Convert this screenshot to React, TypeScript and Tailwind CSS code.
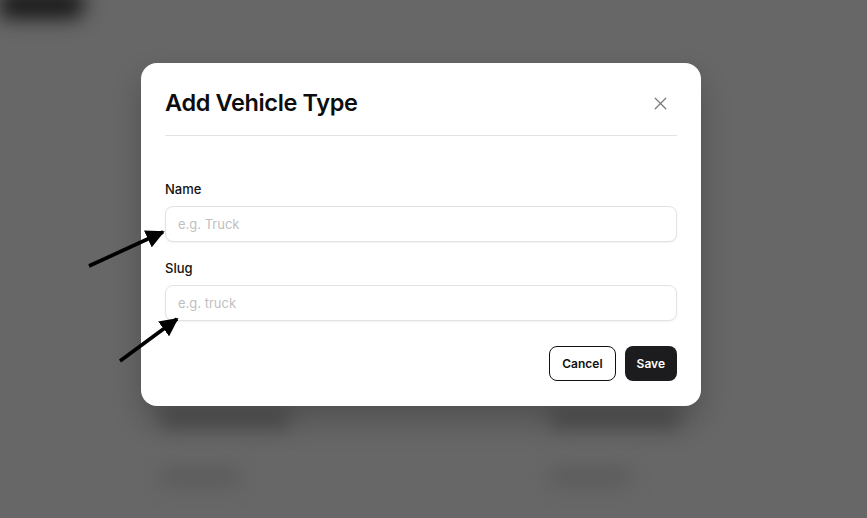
import { X } from 'lucide-react'

// Blurred page behind the dialog
const BackdropPage = () => {
  return (
    <div className="flex h-full flex-col">
      <div className="flex blur-[10px]">
        <div className="h-[26px] w-[84px] -translate-y-[8px] rounded-br-xl bg-[#151515]" />
      </div>
      <div className="mt-[384px] grid grid-cols-2 gap-x-[232px] px-[160px] blur-[10px]">
        <div className="flex flex-col gap-[42px]">
          <div className="h-[18px] w-[130px] rounded bg-[#4c4c4c]" />
          <div className="h-[14px] w-[80px] rounded bg-[#575757]" />
        </div>
        <div className="flex flex-col gap-[42px]">
          <div className="h-[18px] w-[130px] rounded bg-[#4c4c4c]" />
          <div className="h-[14px] w-[80px] rounded bg-[#575757]" />
        </div>
      </div>
    </div>
  )
}

const Field = ({ label, placeholder, id }: { label: string; placeholder: string; id: string }) => (
  <div className="flex flex-col">
    <label htmlFor={id} className="mb-[7px] text-[13px] font-medium leading-5 text-[#111]">
      {label}
    </label>
    <input
      id={id}
      type="text"
      placeholder={placeholder}
      className="h-9 w-full rounded-lg border border-[#e3e3e3] bg-white px-3 text-[13px] text-[#111] shadow-[0_1px_2px_rgba(0,0,0,0.06)] outline-none placeholder:text-[#bfbfbf]"
    />
  </div>
)

const Arrows = () => (
  <svg className="pointer-events-none absolute inset-0" width="867" height="518" viewBox="0 0 867 518">
    <defs>
      <marker id="head" viewBox="0 0 10 10" refX="9" refY="5" markerWidth="5" markerHeight="5" orient="auto">
        <path d="M0 0 L10 5 L0 10 Z" fill="#000" />
      </marker>
    </defs>
    <line x1="89" y1="266" x2="163" y2="232" stroke="#000" strokeWidth="3.7" markerEnd="url(#head)" />
    <line x1="120" y1="361" x2="177" y2="319" stroke="#000" strokeWidth="3.7" markerEnd="url(#head)" />
  </svg>
)

const App = () => {
  return (
    <div className="relative h-[518px] w-full overflow-hidden bg-[#676767] font-['Inter','Liberation_Sans',sans-serif]">
      <BackdropPage />

      <div className="absolute inset-0 flex items-start pl-[141px] pt-[63px]">
        <div className="w-[560px] rounded-2xl bg-white px-6 pb-[25px] pt-6 shadow-[0_14px_30px_rgba(0,0,0,0.22)]">
          <div className="flex items-center justify-between border-b border-[#e2e2e2] pb-4">
            <h2 className="text-[23.5px] font-semibold leading-8 tracking-[-0.015em] text-[#0d0d0d]">Add Vehicle Type</h2>
            <button className="mr-[6px] text-[#7a7a7a]">
              <X size={21} strokeWidth={1.4} />
            </button>
          </div>

          <form className="flex flex-col pt-[43px]">
            <div className="flex flex-col gap-4">
              <Field id="name" label="Name" placeholder="e.g. Truck" />
              <Field id="slug" label="Slug" placeholder="e.g. truck" />
            </div>
            <div className="mt-[25px] flex justify-end gap-[9px]">
              <button
                type="button"
                className="h-[35px] rounded-lg border border-[#111] bg-white px-3 text-[12px] font-semibold text-[#111]"
              >
                Cancel
              </button>
              <button type="button" className="h-[35px] rounded-lg bg-[#1c1c1e] px-3 text-[12px] font-semibold text-white">
                Save
              </button>
            </div>
          </form>
        </div>
      </div>

      <Arrows />
    </div>
  )
}

export default App
